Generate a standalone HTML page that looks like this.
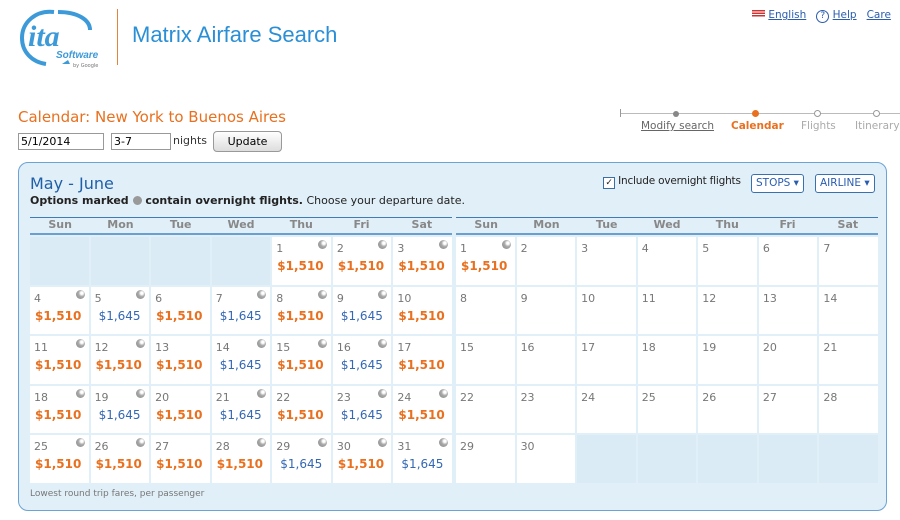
<!DOCTYPE html>
<html><head><meta charset="utf-8"><style>
body{margin:0;width:900px;height:520px;background:#fff;font-family:"DejaVu Sans","Liberation Sans",sans-serif;position:relative;overflow:hidden}
.a{position:absolute;white-space:nowrap}
a{color:#2a5db0}
.box{left:18px;top:162px;width:869px;height:349px;background:#e1eff8;border:1px solid #6aa3d4;border-radius:10px;box-sizing:border-box}
.hd{display:grid;grid-template-columns:repeat(7,1fr);width:422px;border-top:1px solid #3f7bb5;border-bottom:2px solid #6a9fcf;height:15px;font-size:11px;font-weight:bold;color:#888;text-align:center;line-height:14px}
.g{display:grid;grid-template-columns:repeat(7,1fr);grid-auto-rows:47.5px;gap:2px;width:422px}
.g div{background:#fff;position:relative;font-size:11px;color:#777}
.g div.e{background:#dbebf5}
.g div span{position:absolute;left:4px;top:5px}
.g div b{position:absolute;left:5px;top:22px;font-size:12px;color:#e8701f}
.g div i{position:absolute;left:8px;top:22px;font-size:12px;font-style:normal;color:#3468b5}
.g div.o::after{content:"";position:absolute;right:4px;top:3px;width:9px;height:9px;border-radius:50%;background:radial-gradient(circle at 65% 35%,#fff 0 15%,#aaa 40%,#888 100%)}
.btn{border:1px solid #3a70b0;border-radius:3px;background:#fff;color:#2a5db0;font-size:10.5px;padding:1px 4px;height:15px;line-height:15px}
</style></head><body>
<svg class="a" style="left:18px;top:8px" width="84" height="62" viewBox="0 0 84 62"><path d="M36 4 C18 2 4 14 4 30 C4 44 14 54 28 56" fill="none" stroke="#3d9ad9" stroke-width="4"/><path d="M40 4 C60 4 72 12 72 22" fill="none" stroke="#3d9ad9" stroke-width="4"/><text x="10" y="38" font-family="Liberation Serif" font-style="italic" font-weight="bold" font-size="30" fill="#3d9ad9">ita</text><text x="38" y="50" font-family="Liberation Sans" font-style="italic" font-weight="bold" font-size="10" fill="#3d9ad9">Software</text><text x="55" y="59" font-size="5" fill="#777">by Google</text><path d="M28 56 L44 56 L50 52 L52 56" fill="#3d9ad9"/></svg>
<div class="a" style="left:117px;top:9px;width:1px;height:56px;background:#e8823a"></div>
<div class="a" style="left:132px;top:22px;font-family:'Liberation Sans',sans-serif;font-size:22px;color:#2b8fd6">Matrix Airfare Search</div>
<div class="a" style="left:752px;top:9px;font-size:10.5px"><span style="display:inline-block;width:13px;height:8px;background:repeating-linear-gradient(#c33 0 1.3px,#fff 1.3px 2.6px)"></span> <a href="#">English</a> &nbsp; <span style="display:inline-block;width:11px;height:11px;border:1px solid #2a5db0;border-radius:50%;font-size:9px;text-align:center;line-height:11px;color:#2a5db0">?</span> <a href="#">Help</a> &nbsp; <a href="#">Care</a></div>
<div class="a" style="left:18px;top:108px;font-size:15px;color:#e8701f">Calendar: New York to Buenos Aires</div>
<div class="a" style="left:18px;top:133px;width:82px;height:15px;border:1px solid #999;font-size:11px;line-height:15px;padding-left:2px">5/1/2014</div>
<div class="a" style="left:111px;top:133px;width:56px;height:15px;border:1px solid #999;font-size:11px;line-height:15px;padding-left:2px">3-7</div>
<div class="a" style="left:173px;top:134px;font-size:11px;color:#333">nights</div>
<div class="a" style="left:213px;top:131px;width:67px;height:19px;border:1px solid #999;border-radius:4px;background:linear-gradient(#fff,#ddd);font-size:11px;text-align:center;line-height:19px">Update</div>
<div class="a" style="left:621px;top:113px;width:279px;height:1px;background:#bbb"></div>
<div class="a" style="left:620px;top:109px;width:1px;height:8px;background:#999"></div>
<div class="a" style="left:673px;top:111px;width:6px;height:6px;border-radius:50%;background:#888"></div>
<div class="a" style="left:752px;top:110px;width:7px;height:7px;border-radius:50%;background:#e8701f"></div>
<div class="a" style="left:814px;top:110px;width:5px;height:5px;border-radius:50%;border:1px solid #999;background:#fff"></div>
<div class="a" style="left:873px;top:110px;width:5px;height:5px;border-radius:50%;border:1px solid #999;background:#fff"></div>
<div class="a" style="left:641px;top:120px;font-size:10.5px;color:#666;text-decoration:underline">Modify search</div>
<div class="a" style="left:731px;top:120px;font-size:10.5px;color:#e8701f;font-weight:bold">Calendar</div>
<div class="a" style="left:801px;top:120px;font-size:10.5px;color:#aaa">Flights</div>
<div class="a" style="left:855px;top:120px;font-size:10.5px;color:#aaa">Itinerary</div>
<div class="a box"></div>
<div class="a" style="left:30px;top:174px;font-size:16px;color:#1f5fa8">May - June</div>
<div class="a" style="left:30px;top:194px;font-size:11px;color:#222"><b>Options marked <span style="display:inline-block;width:9px;height:9px;border-radius:50%;background:#999;vertical-align:-1px"></span> contain overnight flights.</b> Choose your departure date.</div>
<div class="a" style="left:603px;top:175px;font-size:10.5px;color:#222;letter-spacing:-0.2px"><span style="display:inline-block;width:10px;height:10px;border:1px solid #3a6ea5;background:#fff;font-size:9px;line-height:10px;text-align:center;vertical-align:-1px">✓</span> Include overnight flights</div>
<div class="a btn" style="left:751px;top:174px">STOPS ▾</div>
<div class="a btn" style="left:815px;top:174px">AIRLINE ▾</div>
<div class="a hd" style="left:30px;top:217px"><span>Sun</span><span>Mon</span><span>Tue</span><span>Wed</span><span>Thu</span><span>Fri</span><span>Sat</span></div>
<div class="a hd" style="left:456px;top:217px"><span>Sun</span><span>Mon</span><span>Tue</span><span>Wed</span><span>Thu</span><span>Fri</span><span>Sat</span></div>
<div class="a g" style="left:30px;top:237px">
<div class="e"></div><div class="e"></div><div class="e"></div><div class="e"></div>
<div class="o"><span>1</span><b>$1,510</b></div><div class="o"><span>2</span><b>$1,510</b></div><div class="o"><span>3</span><b>$1,510</b></div>
<div class="o"><span>4</span><b>$1,510</b></div><div class="o"><span>5</span><i>$1,645</i></div><div><span>6</span><b>$1,510</b></div><div class="o"><span>7</span><i>$1,645</i></div><div class="o"><span>8</span><b>$1,510</b></div><div class="o"><span>9</span><i>$1,645</i></div><div><span>10</span><b>$1,510</b></div>
<div class="o"><span>11</span><b>$1,510</b></div><div class="o"><span>12</span><b>$1,510</b></div><div><span>13</span><b>$1,510</b></div><div class="o"><span>14</span><i>$1,645</i></div><div class="o"><span>15</span><b>$1,510</b></div><div class="o"><span>16</span><i>$1,645</i></div><div><span>17</span><b>$1,510</b></div>
<div class="o"><span>18</span><b>$1,510</b></div><div class="o"><span>19</span><i>$1,645</i></div><div><span>20</span><b>$1,510</b></div><div class="o"><span>21</span><i>$1,645</i></div><div><span>22</span><b>$1,510</b></div><div class="o"><span>23</span><i>$1,645</i></div><div class="o"><span>24</span><b>$1,510</b></div>
<div class="o"><span>25</span><b>$1,510</b></div><div class="o"><span>26</span><b>$1,510</b></div><div><span>27</span><b>$1,510</b></div><div class="o"><span>28</span><b>$1,510</b></div><div class="o"><span>29</span><i>$1,645</i></div><div class="o"><span>30</span><b>$1,510</b></div><div class="o"><span>31</span><i>$1,645</i></div>
</div>
<div class="a g" style="left:456px;top:237px">
<div class="o"><span>1</span><b>$1,510</b></div><div><span>2</span></div><div><span>3</span></div><div><span>4</span></div><div><span>5</span></div><div><span>6</span></div><div><span>7</span></div>
<div><span>8</span></div><div><span>9</span></div><div><span>10</span></div><div><span>11</span></div><div><span>12</span></div><div><span>13</span></div><div><span>14</span></div>
<div><span>15</span></div><div><span>16</span></div><div><span>17</span></div><div><span>18</span></div><div><span>19</span></div><div><span>20</span></div><div><span>21</span></div>
<div><span>22</span></div><div><span>23</span></div><div><span>24</span></div><div><span>25</span></div><div><span>26</span></div><div><span>27</span></div><div><span>28</span></div>
<div><span>29</span></div><div><span>30</span></div><div class="e"></div><div class="e"></div><div class="e"></div><div class="e"></div><div class="e"></div>
</div>
<div class="a" style="left:30px;top:489px;font-size:9px;color:#777">Lowest round trip fares, per passenger</div>
</body></html>
